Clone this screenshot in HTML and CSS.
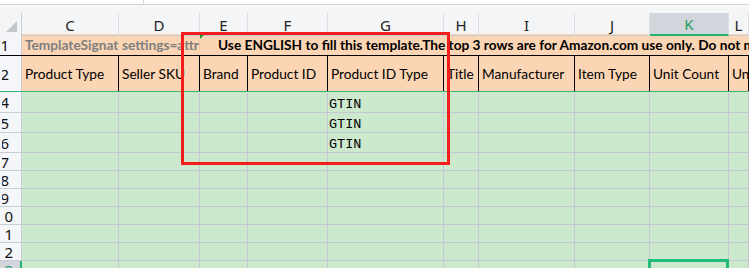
FILE: index.html
```
<!DOCTYPE html>
<html>
<head>
<meta charset="utf-8">
<link rel="stylesheet" href="styles.css">
</head>
<body>
<div class="sheet">
  <div class="topstrip"><div class="namebox"></div></div>
  <div class="band"></div>
  <div class="grid colheads">
    <div class="corner"><span class="tri"></span></div>
    <div class="ch">C</div><div class="ch">D</div><div class="ch">E</div><div class="ch">F</div><div class="ch">G</div><div class="ch">H</div><div class="ch">I</div><div class="ch">J</div><div class="ch sel">K</div><div class="ch">L</div>
  </div>
  <div class="grid r1">
    <div class="rh one"><span>1</span></div>
    <div class="c clip gray">TemplateSignature=UHJvZHVjdA==</div>
    <div class="c clip gray">settings=attributeRow=3&amp;contentLanguageTag=en_US</div>
    <div class="c note"><i class="flag"></i>Use ENGLISH to fill this template.The top 3 rows are for Amazon.com use only. Do not modify or delete the top 3 rows.</div>
    <div class="c"></div><div class="c"></div><div class="c"></div><div class="c"></div><div class="c"></div><div class="c"></div><div class="c"></div>
  </div>
  <div class="grid r2">
    <div class="rh one"><span>2</span></div>
    <div class="c">Product Type</div>
    <div class="c">Seller SKU</div>
    <div class="c">Brand</div>
    <div class="c">Product ID</div>
    <div class="c">Product ID Type</div>
    <div class="c">Title</div>
    <div class="c">Manufacturer</div>
    <div class="c">Item Type</div>
    <div class="c">Unit Count</div>
    <div class="c">Unit Count Type</div>
  </div>
  <div class="grid dr first"><div class="rh one"><span>4</span></div><div class="c"></div><div class="c"></div><div class="c"></div><div class="c"></div><div class="c mono">GTIN</div><div class="c"></div><div class="c"></div><div class="c"></div><div class="c"></div><div class="c"></div></div>
  <div class="grid dr tall"><div class="rh one"><span>5</span></div><div class="c"></div><div class="c"></div><div class="c"></div><div class="c"></div><div class="c mono">GTIN</div><div class="c"></div><div class="c"></div><div class="c"></div><div class="c"></div><div class="c"></div></div>
  <div class="grid dr tall"><div class="rh one"><span>6</span></div><div class="c"></div><div class="c"></div><div class="c"></div><div class="c"></div><div class="c mono">GTIN</div><div class="c"></div><div class="c"></div><div class="c"></div><div class="c"></div><div class="c"></div></div>
  <div class="grid dr"><div class="rh one"><span>7</span></div><div class="c"></div><div class="c"></div><div class="c"></div><div class="c"></div><div class="c"></div><div class="c"></div><div class="c"></div><div class="c"></div><div class="c"></div><div class="c"></div></div>
  <div class="grid dr"><div class="rh one"><span>8</span></div><div class="c"></div><div class="c"></div><div class="c"></div><div class="c"></div><div class="c"></div><div class="c"></div><div class="c"></div><div class="c"></div><div class="c"></div><div class="c"></div></div>
  <div class="grid dr"><div class="rh one"><span>9</span></div><div class="c"></div><div class="c"></div><div class="c"></div><div class="c"></div><div class="c"></div><div class="c"></div><div class="c"></div><div class="c"></div><div class="c"></div><div class="c"></div></div>
  <div class="grid dr"><div class="rh"><span>10</span></div><div class="c"></div><div class="c"></div><div class="c"></div><div class="c"></div><div class="c"></div><div class="c"></div><div class="c"></div><div class="c"></div><div class="c"></div><div class="c"></div></div>
  <div class="grid dr"><div class="rh"><span>11</span></div><div class="c"></div><div class="c"></div><div class="c"></div><div class="c"></div><div class="c"></div><div class="c"></div><div class="c"></div><div class="c"></div><div class="c"></div><div class="c"></div></div>
  <div class="grid dr"><div class="rh"><span>12</span></div><div class="c"></div><div class="c"></div><div class="c"></div><div class="c"></div><div class="c"></div><div class="c"></div><div class="c"></div><div class="c"></div><div class="c"></div><div class="c"></div></div>
  <div class="grid dr"><div class="rh rsel"><span>13</span></div><div class="c"></div><div class="c"></div><div class="c"></div><div class="c"></div><div class="c"></div><div class="c"></div><div class="c"></div><div class="c"></div><div class="c"></div><div class="c"></div></div>
  <div class="redbox"></div>
  <div class="selbox"></div>
</div>
</body>
</html>
```
FILE: styles.css
```
html, body {
  margin: 0;
  padding: 0;
  background: #ffffff;
  overflow: hidden;
}
.sheet {
  position: relative;
  width: 749px;
  height: 268px;
  overflow: hidden;
  font-family: Lato, "Liberation Sans", sans-serif;
  font-size: 13.7px;
  color: #000;
}
.topstrip {
  height: 4px;
  border-bottom: 1px solid #d3d6dc;
  background: #fff;
}
.namebox {
  width: 143px;
  height: 4px;
  border-right: 1px solid #d3d6dc;
}
.band {
  height: 8px;
  background: #f3f5f7;
}
.grid {
  display: grid;
  grid-template-columns: 22px 97px 81px 48px 80px 116px 35px 96px 75px 79px 1fr;
}
.grid > div {
  box-sizing: border-box;
  min-width: 0;
}
.colheads {
  height: 21px;
  background: #f3f5f7;
}
.corner {
  border-right: 1px solid #c8ccd3;
  border-bottom: 1px solid #c8ccd3;
  display: flex;
  justify-content: flex-end;
  align-items: flex-end;
  padding: 0 4px 3px 0;
}
.tri {
  width: 0;
  height: 0;
  border-left: 11px solid transparent;
  border-bottom: 11px solid #c3c7cd;
}
.ch {
  border-right: 1px solid #dcdfe4;
  border-bottom: 1px solid #c8ccd3;
  display: flex;
  align-items: center;
  justify-content: center;
  font-family: "Noto Sans", "DejaVu Sans", sans-serif;
  font-size: 15px;
  color: #222;
  padding-top: 1px;
}
.ch.sel {
  background: #d2d5db;
  color: #1f9d63;
  border-bottom: 2px solid #21b36f;
}
.rh {
  background: #f4f6f9;
  border-right: 1px solid #c8ccd3;
  border-bottom: 1px solid #c8ccd3;
  display: flex;
  align-items: center;
  justify-content: flex-end;
  overflow: hidden;
  white-space: nowrap;
  padding-right: 8px;
  font-family: "Noto Sans", "DejaVu Sans", sans-serif;
  font-size: 15px;
  color: #111;
}
.rh span {
  display: flex;
  justify-content: flex-end;
  flex: 0 0 9px;
  overflow: hidden;
}
.rh.one {
  padding-right: 12px;
}
.rh.one span {
  flex-basis: 7px;
}
.rh.rsel {
  background: #d2d5db;
  color: #1f9d63;
  border-right: 2px solid #21b36f;
  padding-right: 7px;
}
.c {
  display: flex;
  align-items: center;
  padding-left: 3px;
  white-space: nowrap;
  overflow: hidden;
}
.r1 {
  height: 22px;
  background: #fcd5b4;
  border-bottom: 1px solid #000;
  box-sizing: border-box;
}
.r1 .rh {
  border-bottom: none;
}
.r1 .c {
  font-weight: bold;
}
.r1 .gray {
  color: #7f7f7f;
}
.r1 .note {
  overflow: visible;
  padding-left: 18px;
  position: relative;
}
.flag {
  position: absolute;
  left: 0;
  top: 0;
  width: 0;
  height: 0;
  border-top: 5px solid #1a9a3c;
  border-right: 5px solid transparent;
}
.r2 {
  height: 36px;
  border-bottom: 1px solid #3cb371;
  box-sizing: border-box;
}
.r2 .c {
  background: #fcd5b4;
  border-right: 1px solid #000;
}
.r2 .rh {
  border-bottom: none;
}
.dr {
  height: 18px;
}
.dr.first {
  height: 21px;
}
.dr.tall {
  height: 20px;
}
.dr .c {
  background: #cde9cd;
  border-right: 1px solid #c3c8d2;
  border-bottom: 1px solid #c3c8d2;
}
.mono {
  font-family: "Liberation Mono", monospace;
  font-size: 13.5px;
  align-items: flex-end;
  padding-left: 1px;
}
.redbox {
  position: absolute;
  left: 181px;
  top: 32px;
  width: 269px;
  height: 133px;
  box-sizing: border-box;
  border: 3px solid #f41d1d;
}
.selbox {
  position: absolute;
  left: 648px;
  top: 259px;
  width: 81px;
  height: 20px;
  box-sizing: border-box;
  border: 3px solid #20bb78;
}
```
